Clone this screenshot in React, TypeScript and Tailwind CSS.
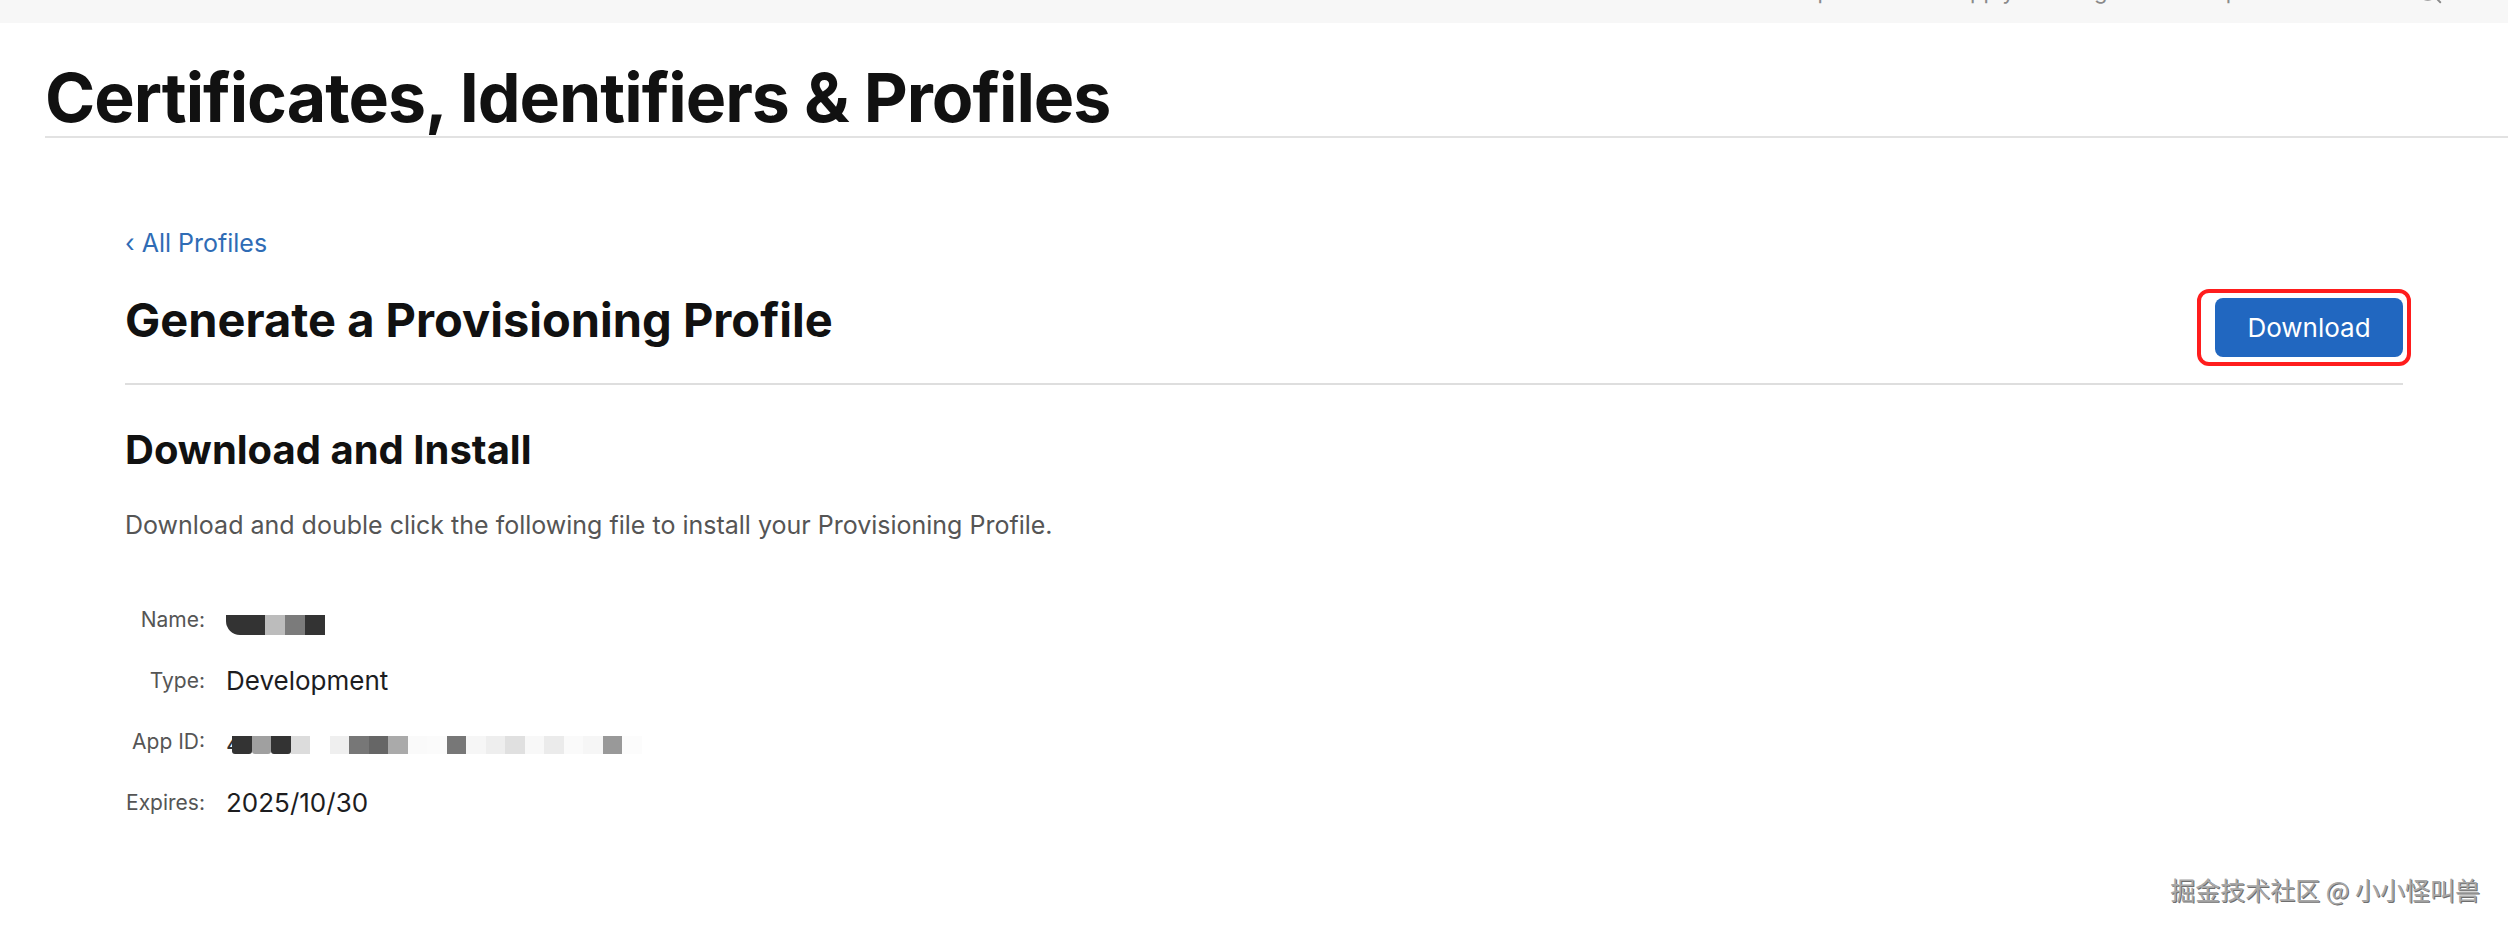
import { Search } from "lucide-react";

const nameBlocks = ["#333333", "#bcbcbc", "#7b7b7b", "#333333"];

const appIdBlocks = [
  "#333333",
  "#a0a0a0",
  "#333333",
  "#dcdcdc",
  "#ffffff",
  "#efefef",
  "#777777",
  "#666666",
  "#aaaaaa",
  "#fafafa",
  "#fbfbfb",
  "#777777",
  "#f6f6f6",
  "#eeeeee",
  "#e0e0e0",
  "#f8f8f8",
  "#ebebeb",
  "#fafafa",
  "#f6f6f6",
  "#999999",
  "#fcfcfc",
];

export default function App() {
  return (
    <div className="relative min-h-[928px] bg-white font-['Inter','Noto_Sans',sans-serif] text-[#1d1d1f]">
      <TopBar />

      <header className="ml-[45px] border-b-2 border-[#e2e2e2] pt-[35px]">
        <h1 className="text-[68px] font-bold leading-[78px] tracking-[-0.015em] text-[#111111]">
          Certificates, Identifiers &amp; Profiles
        </h1>
      </header>

      <main className="pl-[125px] pr-[105px]">
        <a href="#" className="mt-[89px] block text-[25px] leading-[32px] text-[#2f6cb5]">
          ‹ All Profiles
        </a>

        <div className="flex items-start justify-between border-b-2 border-[#dedede] pt-[30px] pb-[17px]">
          <h2 className="mt-[3px] text-[47px] font-bold leading-[56px] text-[#111111]">
            Generate a Provisioning Profile
          </h2>
          <div className="-mr-[8px] rounded-[12px] border-4 border-[#ff1d1d] py-[5px] pr-[4px] pl-[14px]">
            <button
              type="button"
              className="h-[59px] w-[188px] rounded-[8px] bg-[#2167c0] text-[26px] text-white"
            >
              Download
            </button>
          </div>
        </div>

        <section>
          <h3 className="mt-[41px] text-[40px] font-bold leading-[48px] text-[#111111]">
            Download and Install
          </h3>
          <p className="mt-[35px] text-[25px] leading-[32px] text-[#555555]">
            Download and double click the following file to install your Provisioning Profile.
          </p>

          <dl className="mt-[48px] flex flex-col">
            <DetailRow label="Name:">
              <div className="flex translate-y-[5px]">
                {nameBlocks.map((color, i) => (
                  <span
                    key={i}
                    className={i === 0 ? "h-[20px] w-[39px] rounded-bl-[14px]" : "h-[20px] w-[20px]"}
                    style={{ backgroundColor: color }}
                  />
                ))}
              </div>
            </DetailRow>
            <DetailRow label="Type:">
              <span className="text-[26px] leading-[32px] text-[#1d1d1f]">Development</span>
            </DetailRow>
            <DetailRow label="App ID:">
              <div className="flex translate-y-[3px] items-center">
                <span className="w-[6px] overflow-hidden text-[24px] leading-[18px] text-[#333333]">4</span>
                {appIdBlocks.map((color, i) => (
                  <span
                    key={i}
                    className={i < 3 ? "h-[18px] w-[19.5px] rounded-b-[3px]" : "h-[18px] w-[19.5px]"}
                    style={{ backgroundColor: color }}
                  />
                ))}
              </div>
            </DetailRow>
            <DetailRow label="Expires:">
              <span className="text-[26px] leading-[32px] text-[#1d1d1f]">2025/10/30</span>
            </DetailRow>
          </dl>
        </section>
      </main>

      <div className="absolute right-[28px] bottom-[23px] font-['Noto_Sans_CJK_SC',sans-serif] text-[25px] leading-[32px] text-[#a8a8a8] [text-shadow:1px_1px_0_#6e6e6e]">
        掘金技术社区 @ 小小怪叫兽
      </div>
    </div>
  );
}

function TopBar() {
  return (
    <div className="h-[23px] overflow-hidden bg-[#f7f7f7]">
      <div className="-mt-[24px] flex items-center justify-end gap-[44px] pr-[64px] text-[22px] leading-[28px] text-[#8a8a8a]">
        <span>Membership</span>
        <span>How to Apply</span>
        <span>Program</span>
        <span>Help</span>
        <span>Account</span>
        <Search className="h-[30px] w-[30px]" strokeWidth={1.5} />
      </div>
    </div>
  );
}

function DetailRow({ label, children }: { label: string; children: React.ReactNode }) {
  return (
    <div className="flex h-[61px] items-center">
      <dt className="w-[80px] text-right text-[21px] leading-[28px] text-[#555555]">{label}</dt>
      <dd className="ml-[21px]">{children}</dd>
    </div>
  );
}
